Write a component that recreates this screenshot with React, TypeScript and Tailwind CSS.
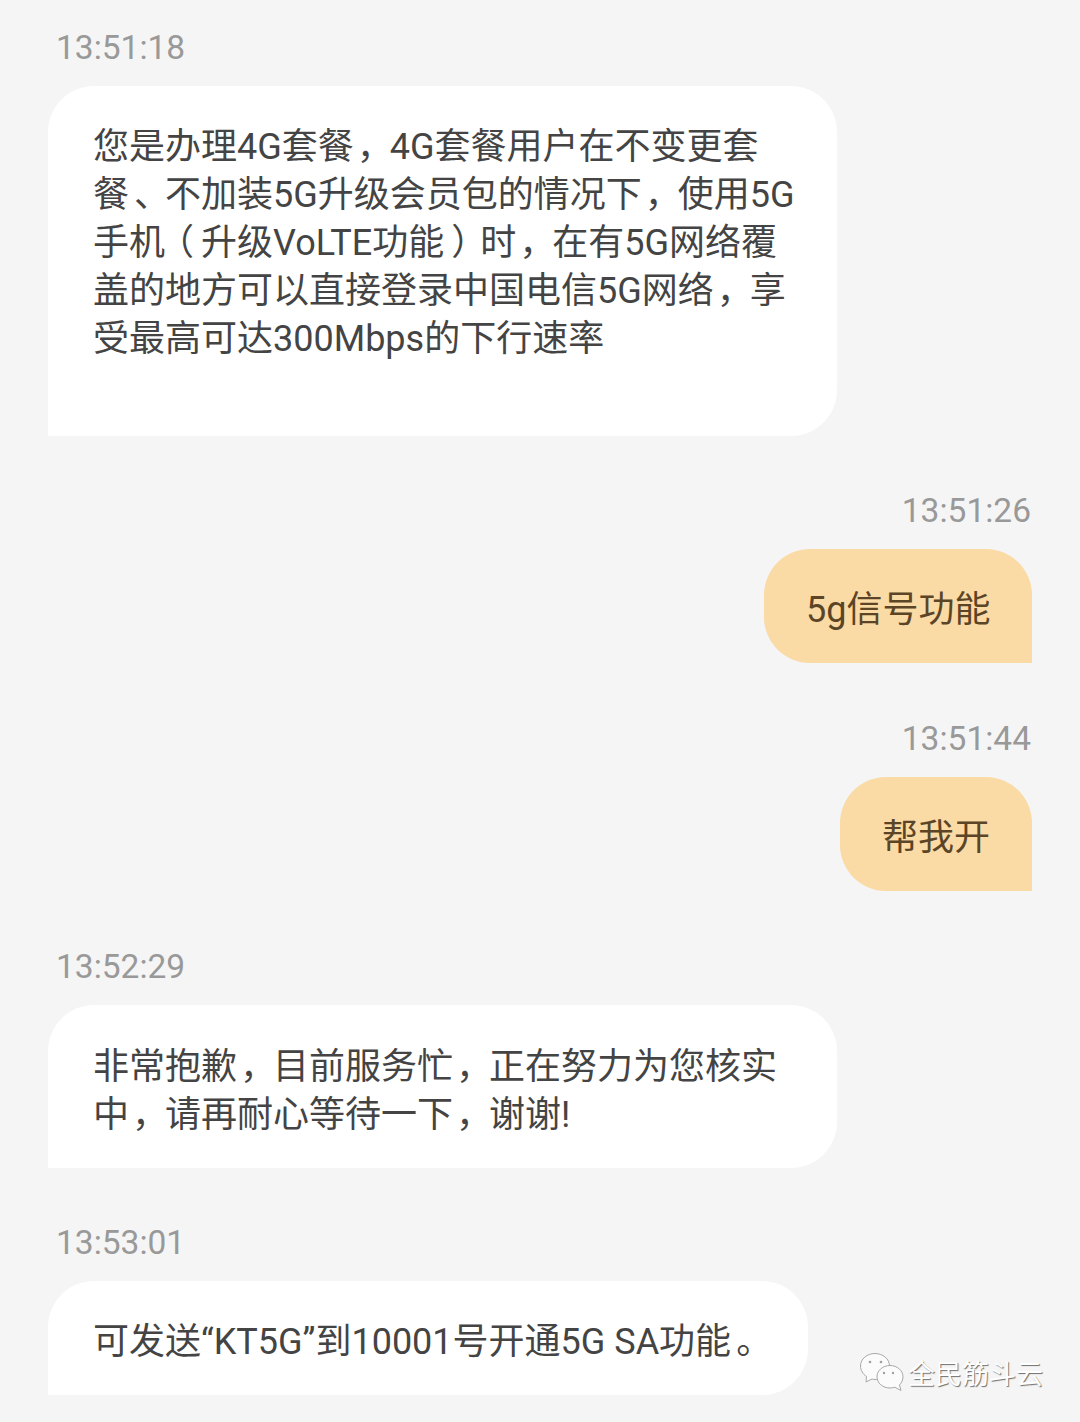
const FONT = 'font-["Roboto","Noto_Sans_CJK_SC",sans-serif]';

// the reference sets its full-width punctuation nearer the middle of the em box:
// half-width glyph plus padding, which adds back up to the 36px em
const PUNCT: Record<string, string> = {
  '，': '[font-feature-settings:"halt"] pl-[3px] pr-[15px]',
  '、': '[font-feature-settings:"halt"] pl-[5px] pr-[13px]',
  '。': '[font-feature-settings:"halt"] pl-[5px] pr-[13px]',
  '（': '[font-feature-settings:"halt"] pl-[11px] pr-[7px]',
  '）': '[font-feature-settings:"halt"] pl-[7px] pr-[11px]',
};

function Line({ text }: { text: string }) {
  return (
    <>
      {text.split(/([，、（）。])/).map((part, index) => (
        <span key={`part-${index}`} className={PUNCT[part]}>
          {part}
        </span>
      ))}
    </>
  );
}

function Timestamp({ time, right = false }: { time: string; right?: boolean }) {
  return (
    <div
      className={`h-10 mb-[19px] text-[33.5px] leading-[42px] text-[#999999] ${
        right ? 'text-right pr-[49px]' : 'pl-14'
      }`}
    >
      {time}
    </div>
  );
}

function Incoming({
  lines,
  className,
}: {
  lines: string[];
  className: string;
}) {
  return (
    <div
      className={`${className} ml-12 pl-[45px] bg-white rounded-[46px] rounded-bl-none text-[36px] leading-[48px] text-[#444444] whitespace-nowrap`}
    >
      {lines.map((line, index) => (
        <div key={`line-${index}`}>
          <Line text={line} />
        </div>
      ))}
    </div>
  );
}

function Outgoing({ text, width }: { text: string; width: string }) {
  return (
    <div className="flex justify-end pr-12">
      <div
        className={`${width} pl-[42px] pt-[37px] pb-[29px] bg-[#fadaa5] rounded-[46px] rounded-br-none text-[36px] leading-[48px] text-[#5b4526] whitespace-nowrap`}
      >
        {text}
      </div>
    </div>
  );
}

function Watermark() {
  return (
    <div className="absolute left-[860px] top-[1353px] flex items-start gap-1">
      <svg width="44" height="38" viewBox="0 0 44 38" fill="none">
        <path
          d="M15 .5C7 .5.5 6 .5 13c0 4.500 2.500 8 6 10.500L6 29l6-3c1 .3 2 .5 3 .5 1 0 2 0 3-.3C29 24 30 17 29.500 13 29.500 6 23 .5 15 .5Z"
          fill="#fbfbfb"
          stroke="#a8a8a8"
        />
        <path
          d="M30 12.500c-7.200 0-13 5-13 11.300S22.800 35 30 35c1.800 0 3.300-.3 4.800-.8L41 37.500l-1.500-5.600c2.200-2 3.500-5 3.500-8.100 0-6.300-5.800-11.300-13-11.300Z"
          fill="#fbfbfb"
          stroke="#a8a8a8"
        />
        <circle cx="10" cy="9" r="1.300" fill="#a0a0a0" />
        <circle cx="21" cy="9" r="1.300" fill="#a0a0a0" />
        <circle cx="24" cy="20" r="1.200" fill="#a0a0a0" />
        <circle cx="33" cy="20" r="1.200" fill="#a0a0a0" />
      </svg>
      <span className="mt-[6px] text-[27px] leading-8 text-white [text-shadow:1px_1px_1px_#707070]">
        全民筋斗云
      </span>
    </div>
  );
}

export default function App() {
  return (
    <div className={`relative w-[1080px] h-[1422px] overflow-hidden bg-[#f5f5f5] pt-[27px] ${FONT}`}>
      <Timestamp time="13:51:18" />
      <Incoming
        className="w-[789px] pt-[37px] pb-[73px]"
        lines={[
          '您是办理4G套餐，4G套餐用户在不变更套',
          '餐、不加装5G升级会员包的情况下，使用5G',
          '手机（升级VoLTE功能）时，在有5G网络覆',
          '盖的地方可以直接登录中国电信5G网络，享',
          '受最高可达300Mbps的下行速率',
        ]}
      />

      <div className="mt-[54px]">
        <Timestamp time="13:51:26" right />
        <Outgoing text="5g信号功能" width="w-[268px]" />
      </div>

      <div className="mt-[55px]">
        <Timestamp time="13:51:44" right />
        <Outgoing text="帮我开" width="w-[192px]" />
      </div>

      <div className="mt-[55px]">
        <Timestamp time="13:52:29" />
        <Incoming
          className="w-[789px] pt-[38px] pb-[29px]"
          lines={['非常抱歉，目前服务忙，正在努力为您核实', '中，请再耐心等待一下，谢谢!']}
        />
      </div>

      <div className="mt-[54px]">
        <Timestamp time="13:53:01" />
        <Incoming
          className="w-[760px] pt-[37px] pb-[29px]"
          lines={['可发送“KT5G”到10001号开通5G SA功能。']}
        />
      </div>

      <Watermark />
    </div>
  );
}
